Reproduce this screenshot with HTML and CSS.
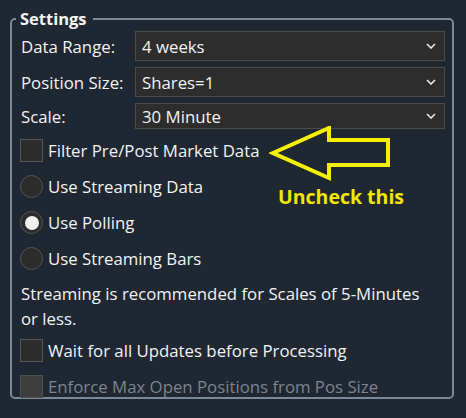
FILE: index.html
```html
<!DOCTYPE html>
<html>
<head>
<meta charset="utf-8">
<link rel="stylesheet" href="styles.css">
</head>
<body>
<div class="page">
  <fieldset class="group">
    <legend class="legend">Settings</legend>
    <div class="fields">
      <label class="lbl">Data Range:</label>
      <div class="combo"><span>4 weeks</span><svg class="chev" viewBox="0 0 10 6" width="10" height="6"><path d="M1 1 L5 5 L9 1" fill="none" stroke="#e8e8e8" stroke-width="1.6"/></svg></div>
      <label class="lbl">Position Size:</label>
      <div class="combo"><span>Shares=1</span><svg class="chev" viewBox="0 0 10 6" width="10" height="6"><path d="M1 1 L5 5 L9 1" fill="none" stroke="#e8e8e8" stroke-width="1.6"/></svg></div>
      <label class="lbl">Scale:</label>
      <div class="combo short"><span>30 Minute</span><svg class="chev" viewBox="0 0 10 6" width="10" height="6"><path d="M1 1 L5 5 L9 1" fill="none" stroke="#e8e8e8" stroke-width="1.6"/></svg></div>
    </div>
    <div class="options">
      <div class="opt"><span class="box"></span><span>Filter Pre/Post Market Data</span></div>
      <div class="opt"><span class="radio"></span><span>Use Streaming Data</span></div>
      <div class="opt"><span class="radio on"><span class="dot"></span></span><span>Use Polling</span></div>
      <div class="opt"><span class="radio"></span><span>Use Streaming Bars</span></div>
      <p class="note">Streaming is recommended for Scales of 5-Minutes or less.</p>
      <div class="opt"><span class="box"></span><span>Wait for all Updates before Processing</span></div>
      <div class="opt disabled"><span class="box"></span><span>Enforce Max Open Positions from Pos Size</span></div>
    </div>
  </fieldset>
  <svg class="arrow" width="130" height="60" viewBox="0 0 130 60">
    <polygon points="4,27 60,2 60,14 119,14 119,39 60,39 60,52" fill="none" stroke="#f6f000" stroke-width="4" stroke-linejoin="miter"/>
  </svg>
  <div class="callout">Uncheck this</div>
</div>
</body>
</html>
```
FILE: styles.css
```css
html, body {
  margin: 0;
  padding: 0;
  background: #1f2832;
}
.page {
  position: relative;
  width: 466px;
  height: 418px;
  padding: 9px 12px 0 10px;
  box-sizing: border-box;
  font-family: "Open Sans", "Noto Sans", sans-serif;
  font-size: 16.8px;
  color: #f2f2f2;
}
.group {
  margin: 0;
  width: 444px;
  height: 390px;
  box-sizing: border-box;
  border: 2px solid #7b8898;
  border-radius: 5px;
  padding: 0 7px 0 9px;
}
.legend {
  font-weight: bold;
  font-size: 16.5px;
  line-height: 20px;
  padding: 0 6px 0 4px;
  margin-left: -5px;
  color: #f4f4f4;
}
.fields {
  display: grid;
  grid-template-columns: 114px 1fr;
  row-gap: 6px;
  margin-top: 2px;
}
.lbl {
  display: flex;
  align-items: center;
}
.combo {
  height: 30px;
  box-sizing: border-box;
  background: #2d2d2d;
  border: 1px solid #4b4b4b;
  display: flex;
  align-items: center;
  justify-content: space-between;
  padding: 0 8px 0 6px;
}
.combo.short { height: 26px; }
.chev { display: block; }
.options {
  display: flex;
  flex-direction: column;
  margin-top: 10px;
}
.opt {
  display: flex;
  align-items: center;
  height: 23px;
  margin-bottom: 13px;
  margin-left: -1px;
}
.box, .radio {
  width: 23px;
  height: 23px;
  box-sizing: border-box;
  flex: none;
  margin-right: 5px;
  background: #2c2c2c;
  border: 1px solid #555555;
}
.radio {
  border-radius: 50%;
  display: flex;
  align-items: center;
  justify-content: center;
}
.dot {
  width: 14px;
  height: 14px;
  border-radius: 50%;
  background: #f0f0f0;
}
.note {
  margin: -2px 0 8px 0;
  line-height: 25px;
  width: 412px;
}
.disabled { color: #7c848e; }
.disabled .box { background: #3e3e3e; border-color: #4f4f4f; }
.arrow {
  position: absolute;
  left: 269px;
  top: 126px;
}
.callout {
  position: absolute;
  left: 278px;
  top: 183px;
  color: #f3e600;
  font-weight: bold;
  font-size: 19.5px;
  line-height: 28px;
}
```
